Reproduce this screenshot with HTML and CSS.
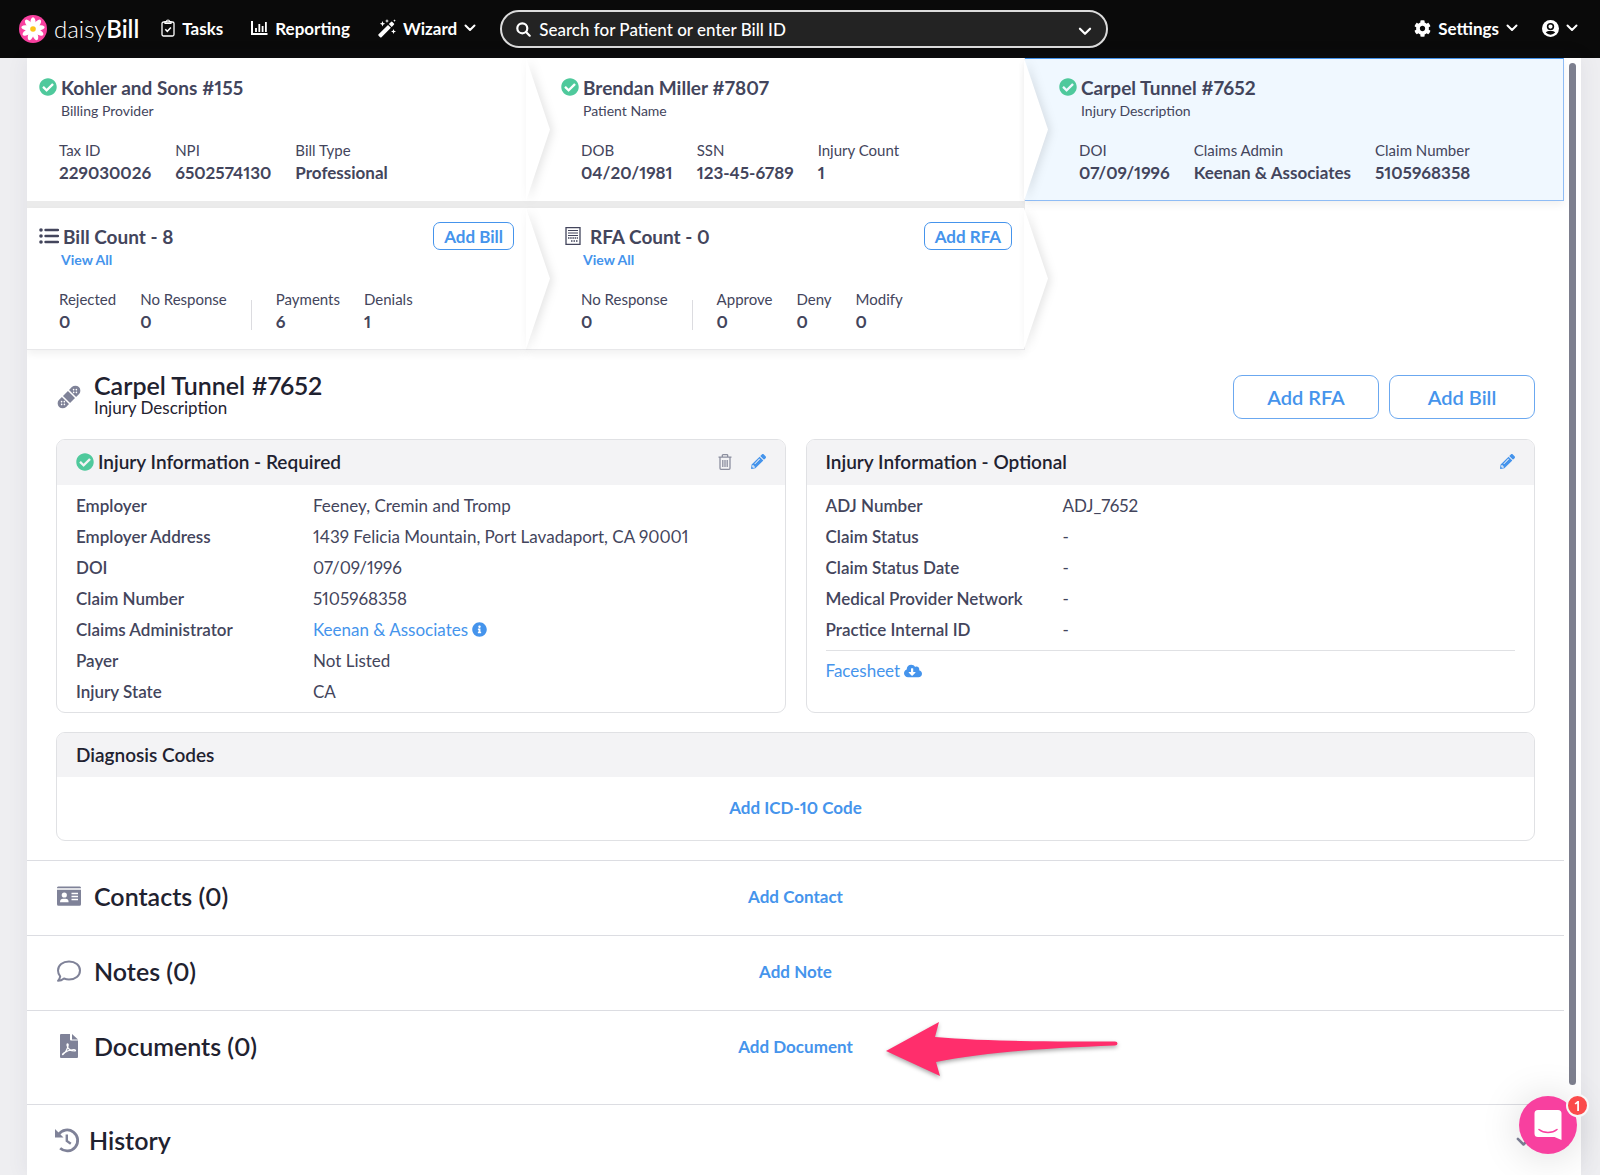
FILE: index.html
```html
<!DOCTYPE html>
<html lang="en">
<head>
    <meta charset="UTF-8">
    <meta name="viewport" content="width=device-width, initial-scale=1.0">
    <title>Carpel Tunnel #7652 | daisyBill</title>
    <link rel="stylesheet" href="styles.css">
</head>
<body>
    <!-- Shared icons -->
    <svg class="sprite" aria-hidden="true">
        <symbol id="i-check" viewBox="0 0 512 512"><path fill="currentColor" d="M504 256c0 136.967-111.033 248-248 248S8 392.967 8 256 119.033 8 256 8s248 111.033 248 248zM227.314 387.314l184-184c6.248-6.248 6.248-16.379 0-22.627l-22.627-22.627c-6.248-6.249-16.379-6.249-22.628 0L216 308.118l-70.059-70.059c-6.248-6.248-16.379-6.248-22.628 0l-22.627 22.627c-6.248 6.248-6.248 16.379 0 22.627l104 104c6.249 6.249 16.379 6.249 22.628.001z"/></symbol>
        <symbol id="i-chevron" viewBox="0 0 12 8"><path d="M1.5 1.5 6 6l4.5-4.5" fill="none" stroke="currentColor" stroke-width="2" stroke-linecap="round" stroke-linejoin="round"/></symbol>
        <symbol id="i-pencil" viewBox="0 0 512 512"><path fill="currentColor" d="M497.9 142.1l-46.1 46.1c-4.7 4.7-12.3 4.7-17 0l-111-111c-4.7-4.7-4.7-12.3 0-17l46.1-46.1c18.7-18.7 49.1-18.7 67.9 0l60.1 60.1c18.8 18.7 18.8 49.1 0 67.9zM284.2 99.8L21.6 362.4.4 483.9c-2.9 16.4 11.4 30.6 27.8 27.8l121.5-21.3 262.6-262.6c4.7-4.7 4.7-12.3 0-17l-111-111c-4.8-4.7-12.4-4.7-17.1 0zM124.1 339.9c-5.5-5.5-5.5-14.3 0-19.8l154-154c5.5-5.5 14.3-5.5 19.8 0s5.5 14.3 0 19.8l-154 154c-5.5 5.5-14.3 5.5-19.8 0zM88 424h48v36.3l-64.5 11.3-31.1-31.1L51.7 376H88v48z"/></symbol>
    </svg>

    <header class="navbar">
        <a class="logo" href="#">
            <svg width="28" height="28" viewBox="0 0 28 28" aria-hidden="true">
                <circle cx="14" cy="14" r="14" fill="#f8409f"/>
                <g fill="#fff">
                    <ellipse cx="14" cy="7.5" rx="2.6" ry="5.3"/>
                    <ellipse cx="14" cy="7.5" rx="2.6" ry="5.3" transform="rotate(40 14 14)"/>
                    <ellipse cx="14" cy="7.5" rx="2.6" ry="5.3" transform="rotate(80 14 14)"/>
                    <ellipse cx="14" cy="7.5" rx="2.6" ry="5.3" transform="rotate(120 14 14)"/>
                    <ellipse cx="14" cy="7.5" rx="2.6" ry="5.3" transform="rotate(160 14 14)"/>
                    <ellipse cx="14" cy="7.5" rx="2.6" ry="5.3" transform="rotate(200 14 14)"/>
                    <ellipse cx="14" cy="7.5" rx="2.6" ry="5.3" transform="rotate(240 14 14)"/>
                    <ellipse cx="14" cy="7.5" rx="2.6" ry="5.3" transform="rotate(280 14 14)"/>
                    <ellipse cx="14" cy="7.5" rx="2.6" ry="5.3" transform="rotate(320 14 14)"/>
                </g>
                <circle cx="14" cy="14" r="2.8" fill="#fcc419"/>
            </svg>
            <span class="logo-text">daisy<b>Bill</b></span>
        </a>
        <nav class="nav-links">
            <a href="#">
                <svg width="14" height="18" viewBox="0 0 14 18" fill="none" stroke="currentColor" aria-hidden="true">
                    <rect x="1" y="3" width="12" height="14" rx="1.5" stroke-width="1.3"/>
                    <path d="M4 4.500v-2h1.500a1.500 1.500 0 0 1 3 0H10v2z" stroke-width="1.2"/>
                    <path d="m4.300 10.300 2 2 3.600-3.800" stroke-width="1.5"/>
                </svg>
                Tasks
            </a>
            <a href="#">
                <svg width="17" height="16" viewBox="0 0 17 16" fill="none" stroke="currentColor" stroke-width="2" aria-hidden="true">
                    <path d="M1 1v13h15.500"/>
                    <path d="M5 8v4M8.300 4v8M11.600 6v6M14.900 2v10" stroke-width="1.8"/>
                </svg>
                Reporting
            </a>
            <a href="#">
                <svg width="18" height="19" viewBox="0 0 18 19" fill="currentColor" aria-hidden="true">
                    <path d="M.6 15.300 10 5.900l2.900 2.900-9.400 9.400a1 1 0 0 1-1.400 0L.6 16.700a1 1 0 0 1 0-1.400zM10.800 5.100l2.200-2.200a1 1 0 0 1 1.400 0l1.500 1.500a1 1 0 0 1 0 1.400L13.700 8z"/>
                    <path d="m4.500 2 .8 1.900L7.200 4.700l-1.900.8-.8 1.900-.8-1.900-1.900-.8 1.900-.8zM9 0l.6 1.400 1.400.6-1.400.6L9 4l-.6-1.400L7 2l1.400-.6zM15.500 10l.7 1.800 1.800.7-1.800.7-.7 1.800-.7-1.800-1.800-.7 1.800-.7zM16.500.2l.4 1 1 .4-1 .4-.4 1-.4-1-1-.4 1-.4z"/>
                </svg>
                Wizard
                <svg class="chevron" width="12" height="8"><use href="#i-chevron"/></svg>
            </a>
        </nav>
        <div class="search">
            <svg width="15" height="15" viewBox="0 0 15 15" fill="none" stroke="currentColor" stroke-width="2.2" stroke-linecap="round" aria-hidden="true">
                <circle cx="6.3" cy="6.3" r="5"/><path d="m10 10 3.700 3.700"/>
            </svg>
            <input type="text" aria-label="Search for Patient or enter Bill ID" placeholder="Search for Patient or enter Bill ID">
            <button type="button" aria-label="Search options"><svg width="14" height="9"><use href="#i-chevron"/></svg></button>
        </div>
        <div class="nav-user">
            <a href="#">
                <svg width="17" height="17" viewBox="0 0 512 512" fill="currentColor" aria-hidden="true"><path d="M487.4 315.7l-42.6-24.6c4.3-23.2 4.3-47 0-70.2l42.6-24.6c4.9-2.8 7.1-8.6 5.5-14-11.1-35.6-30-67.8-54.7-94.6-3.8-4.1-10-5.1-14.8-2.3L380.8 110c-17.9-15.4-38.5-27.3-60.8-35.1V25.8c0-5.6-3.9-10.5-9.4-11.7-36.7-8.2-74.3-7.8-109.2 0-5.5 1.2-9.4 6.1-9.4 11.7V75c-22.2 7.9-42.8 19.8-60.8 35.1L88.7 85.5c-4.9-2.8-11-1.9-14.8 2.3-24.7 26.7-43.6 58.9-54.7 94.6-1.7 5.4.6 11.2 5.5 14L67.3 221c-4.3 23.2-4.3 47 0 70.2l-42.6 24.6c-4.9 2.8-7.1 8.6-5.5 14 11.1 35.6 30 67.8 54.7 94.6 3.8 4.1 10 5.1 14.8 2.3l42.6-24.6c17.9 15.4 38.5 27.3 60.8 35.1v49.2c0 5.6 3.9 10.5 9.4 11.7 36.7 8.2 74.3 7.8 109.2 0 5.5-1.2 9.4-6.1 9.4-11.7v-49.2c22.2-7.9 42.8-19.8 60.8-35.1l42.6 24.6c4.9 2.8 11 1.9 14.8-2.3 24.7-26.7 43.6-58.9 54.7-94.6 1.5-5.5-.7-11.3-5.6-14.1zM256 336c-44.1 0-80-35.9-80-80s35.9-80 80-80 80 35.9 80 80-35.9 80-80 80z"/></svg>
                Settings
                <svg class="chevron" width="12" height="8"><use href="#i-chevron"/></svg>
            </a>
            <a href="#" aria-label="Account">
                <svg width="17" height="17" viewBox="0 0 17 17" aria-hidden="true">
                    <circle cx="8.5" cy="8.5" r="8.5" fill="currentColor"/>
                    <circle cx="8.5" cy="6.6" r="2.9" fill="none" stroke="#0a0a0a" stroke-width="1.6"/>
                    <path d="M3.800 12.600c1-1.500 2.200-1.700 4.700-1.700s3.700.2 4.700 1.700a6.400 6.400 0 0 1-9.400 0z" fill="#0a0a0a"/>
                </svg>
                <svg class="chevron" width="12" height="8"><use href="#i-chevron"/></svg>
            </a>
        </div>
    </header>

    <main class="page">
        <div class="cards">
            <section class="card first">
                <div class="card-head">
                    <svg class="check" width="18" height="18"><use href="#i-check"/></svg>
                    <h2>Kohler and Sons #155</h2>
                </div>
                <p class="card-sub">Billing Provider</p>
                <dl class="stats">
                    <div><dt>Tax ID</dt><dd>229030026</dd></div>
                    <div><dt>NPI</dt><dd>6502574130</dd></div>
                    <div><dt>Bill Type</dt><dd>Professional</dd></div>
                </dl>
                <svg class="card-arrow" preserveAspectRatio="none" viewBox="0 0 24 142"><path d="M0 0 24 71 0 142z"/></svg>
            </section>
            <section class="card">
                <div class="card-head">
                    <svg class="check" width="18" height="18"><use href="#i-check"/></svg>
                    <h2>Brendan Miller #7807</h2>
                </div>
                <p class="card-sub">Patient Name</p>
                <dl class="stats">
                    <div><dt>DOB</dt><dd>04/20/1981</dd></div>
                    <div><dt>SSN</dt><dd>123-45-6789</dd></div>
                    <div><dt>Injury Count</dt><dd>1</dd></div>
                </dl>
                <svg class="card-arrow" preserveAspectRatio="none" viewBox="0 0 24 142"><path d="M0 0 24 71 0 142z"/></svg>
            </section>
            <section class="card active">
                <div class="card-head">
                    <svg class="check" width="18" height="18"><use href="#i-check"/></svg>
                    <h2>Carpel Tunnel #7652</h2>
                </div>
                <p class="card-sub">Injury Description</p>
                <dl class="stats">
                    <div><dt>DOI</dt><dd>07/09/1996</dd></div>
                    <div><dt>Claims Admin</dt><dd>Keenan &amp; Associates</dd></div>
                    <div><dt>Claim Number</dt><dd>5105968358</dd></div>
                </dl>
            </section>
        </div>

        <div class="cards counts">
            <section class="card first">
                <div class="card-head">
                    <svg width="20" height="16" viewBox="0 0 20 16" aria-hidden="true">
                        <g fill="currentColor"><circle cx="2" cy="2" r="1.8"/><circle cx="2" cy="8" r="1.8"/><circle cx="2" cy="14" r="1.8"/></g>
                        <path d="M6.500 2H19M6.500 8H19M6.500 14H19" stroke="currentColor" stroke-width="2.4" stroke-linecap="round"/>
                    </svg>
                    <h2>Bill Count - 8</h2>
                    <button type="button" class="btn-small">Add Bill</button>
                </div>
                <p class="card-sub"><a href="#">View All</a></p>
                <dl class="stats">
                    <div><dt>Rejected</dt><dd>0</dd></div>
                    <div><dt>No Response</dt><dd>0</dd></div>
                    <div class="split"><dt>Payments</dt><dd>6</dd></div>
                    <div><dt>Denials</dt><dd>1</dd></div>
                </dl>
                <svg class="card-arrow" preserveAspectRatio="none" viewBox="0 0 24 142"><path d="M0 0 24 71 0 142z"/></svg>
            </section>
            <section class="card rfa">
                <div class="card-head">
                    <svg width="16" height="18" viewBox="0 0 16 18" fill="none" stroke="currentColor" aria-hidden="true">
                        <path d="M1 .7h14v16.600H1z" stroke-width="1.3"/>
                        <path d="M3 3.500h10M3 6h10M3 8.500h10" stroke-width="1.2"/>
                        <path d="M3 11h10M6 14h1.500M8.500 14H10M11 14h2" stroke-width="1.4" stroke-dasharray="1.5 .7"/>
                    </svg>
                    <h2>RFA Count - 0</h2>
                    <button type="button" class="btn-small">Add RFA</button>
                </div>
                <p class="card-sub"><a href="#">View All</a></p>
                <dl class="stats">
                    <div><dt>No Response</dt><dd>0</dd></div>
                    <div class="split"><dt>Approve</dt><dd>0</dd></div>
                    <div><dt>Deny</dt><dd>0</dd></div>
                    <div><dt>Modify</dt><dd>0</dd></div>
                </dl>
                <svg class="card-arrow" preserveAspectRatio="none" viewBox="0 0 24 142"><path d="M0 0 24 71 0 142z"/></svg>
            </section>
        </div>

        <section class="injury">
            <div class="injury-head">
                <svg width="26" height="26" viewBox="0 0 26 26" aria-hidden="true">
                    <g transform="rotate(-45 13 13)">
                        <path d="M4 8h4v10H4A5 5 0 0 1 4 8zM22 8h-4v10h4a5 5 0 0 0 0-10zM9.500 8h7v10h-7z" fill="#7f8298"/>
                        <g fill="#fff"><circle cx="2.6" cy="13" r=".8"/><circle cx="4.500" cy="11" r=".8"/><circle cx="4.500" cy="15" r=".8"/><circle cx="6.400" cy="13" r=".8"/><circle cx="23.400" cy="13" r=".8"/><circle cx="21.500" cy="11" r=".8"/><circle cx="21.500" cy="15" r=".8"/><circle cx="19.600" cy="13" r=".8"/></g>
                    </g>
                </svg>
                <div class="injury-title">
                    <h1>Carpel Tunnel #7652</h1>
                    <p>Injury Description</p>
                </div>
                <button type="button" class="btn">Add RFA</button>
                <button type="button" class="btn">Add Bill</button>
            </div>

            <div class="panels">
                <section class="panel">
                    <div class="panel-head">
                        <svg class="check" width="18" height="18"><use href="#i-check"/></svg>
                        <h3>Injury Information - Required</h3>
                        <div class="panel-tools">
                            <button type="button" aria-label="Delete" class="trash">
                                <svg width="14" height="16" viewBox="0 0 14 16" fill="none" stroke="currentColor" stroke-width="1.3" aria-hidden="true">
                                    <path d="M.5 3.200h13M4.300 3V1.500q0-.8.800-.8h3.800q.8 0 .8.800V3M2 3.500v10.800q0 1 1 1h8q1 0 1-1V3.500M4.800 6v7M7 6v7M9.200 6v7"/>
                                </svg>
                            </button>
                            <button type="button" aria-label="Edit"><svg width="15" height="15"><use href="#i-pencil"/></svg></button>
                        </div>
                    </div>
                    <dl class="details">
                        <dt>Employer</dt><dd>Feeney, Cremin and Tromp</dd>
                        <dt>Employer Address</dt><dd>1439 Felicia Mountain, Port Lavadaport, CA 90001</dd>
                        <dt>DOI</dt><dd>07/09/1996</dd>
                        <dt>Claim Number</dt><dd>5105968358</dd>
                        <dt>Claims Administrator</dt>
                        <dd>
                            <a href="#">Keenan &amp; Associates
                            <svg width="15" height="15" viewBox="0 0 512 512" fill="currentColor" aria-hidden="true"><path d="M256 8C119.043 8 8 119.083 8 256c0 136.997 111.043 248 248 248s248-111.003 248-248C504 119.083 392.957 8 256 8zm0 110c23.196 0 42 18.804 42 42s-18.804 42-42 42-42-18.804-42-42 18.804-42 42-42zm56 254c0 6.627-5.373 12-12 12h-88c-6.627 0-12-5.373-12-12v-24c0-6.627 5.373-12 12-12h12v-64h-12c-6.627 0-12-5.373-12-12v-24c0-6.627 5.373-12 12-12h64c6.627 0 12 5.373 12 12v100h12c6.627 0 12 5.373 12 12v24z"/></svg></a>
                        </dd>
                        <dt>Payer</dt><dd>Not Listed</dd>
                        <dt>Injury State</dt><dd>CA</dd>
                    </dl>
                </section>
                <section class="panel">
                    <div class="panel-head">
                        <h3>Injury Information - Optional</h3>
                        <div class="panel-tools">
                            <button type="button" aria-label="Edit"><svg width="15" height="15"><use href="#i-pencil"/></svg></button>
                        </div>
                    </div>
                    <dl class="details">
                        <dt>ADJ Number</dt><dd>ADJ_7652</dd>
                        <dt>Claim Status</dt><dd>-</dd>
                        <dt>Claim Status Date</dt><dd>-</dd>
                        <dt>Medical Provider Network</dt><dd>-</dd>
                        <dt>Practice Internal ID</dt><dd>-</dd>
                    </dl>
                    <p class="facesheet">
                        <a href="#">Facesheet
                        <svg width="18" height="14" viewBox="0 32 640 448" fill="currentColor" aria-hidden="true"><path d="M537.6 226.6c4.1-10.7 6.4-22.4 6.4-34.6 0-53-43-96-96-96-19.7 0-38.1 6-53.3 16.2C367 64.2 315.3 32 256 32c-88.4 0-160 71.6-160 160 0 2.7.1 5.4.2 8.1C40.2 219.8 0 273.2 0 336c0 79.5 64.5 144 144 144h368c70.7 0 128-57.3 128-128 0-61.9-44-113.6-102.4-125.4zm-132.9 88.700L299.300 420.700c-6.200 6.200-16.400 6.200-22.600 0L171.300 315.300c-10.100-10.100-2.900-27.300 11.300-27.300H248V176c0-8.800 7.200-16 16-16h48c8.800 0 16 7.200 16 16v112h65.400c14.200 0 21.400 17.200 11.300 27.300z"/></svg></a>
                    </p>
                </section>
            </div>

            <section class="panel diagnosis">
                <div class="panel-head"><h3>Diagnosis Codes</h3></div>
                <p><a class="add" href="#">Add ICD-10 Code</a></p>
            </section>
        </section>

        <section class="row">
            <svg width="26" height="20" viewBox="0 0 26 20" aria-hidden="true">
                <path d="M1 2.200A1.500 1.500 0 0 1 2.200.5h21.600A1.500 1.500 0 0 1 25 2.200zM1 3.700h24v14.600a1.500 1.500 0 0 1-1.500 1.500h-21A1.500 1.500 0 0 1 1 18.300z" fill="#7f8298"/>
                <circle cx="8.3" cy="9" r="2.6" fill="#fff"/>
                <path d="M4 16.200c0-2.400 1.300-3.400 3-3.400h2.600c1.700 0 3 1 3 3.400z" fill="#fff"/>
                <path d="M15.500 7.500H22M15.500 10.500H22M15.500 13.500H22" stroke="#fff" stroke-width="1.4"/>
            </svg>
            <h2>Contacts (0)</h2>
            <a class="add" href="#">Add Contact</a>
        </section>
        <section class="row">
            <svg width="26" height="24" viewBox="0 0 26 24" fill="none" stroke="#7f8298" stroke-width="2" stroke-linejoin="round" aria-hidden="true">
                <path d="M13 2.500c6.300 0 11 3.900 11 9s-4.700 9-11 9c-1.800 0-3.500-.4-5-1-1.500 1.300-3.500 2.300-6 2.300 1.300-1.500 2-2.900 2.200-4.500C2.800 15.700 2 13.700 2 11.500c0-5.100 4.700-9 11-9z"/>
            </svg>
            <h2>Notes (0)</h2>
            <a class="add" href="#">Add Note</a>
        </section>
        <section class="row documents">
            <svg width="26" height="26" viewBox="0 0 26 26" aria-hidden="true">
                <path d="M4 2q0-1 1-1h9v5.500q0 1 1 1h7V24q0 1-1 1H5q-1 0-1-1zM16 1l6 5.500h-6z" fill="#7f8298"/>
                <path d="M7 21.500c2-1.500 5-6 5.200-9.500 0-1.500-1.400-1.500-1.200.3.400 3 3.300 5.700 7.500 5.700 1.800-.2 1-1.400-.8-1.300-4 .3-7.700 1.700-10.200 3.600-1.200 1-1.300 1.800-.5 1.200z" fill="none" stroke="#fff" stroke-width="1.2"/>
            </svg>
            <h2>Documents (0)</h2>
            <a class="add" href="#">Add Document
                <svg class="pointer" width="236" height="60" viewBox="0 0 236 60" aria-hidden="true">
                    <path d="M2 31 55 2l-4 15c45 4 100 4.500 180 4.500q2.500 0 2.500 2t-2.500 2C160 28 95 33 52 42l4 14z" fill="#ff2e6c"/>
                </svg>
            </a>
        </section>
        <section class="row history">
            <svg width="26" height="26" viewBox="0 0 26 26" fill="none" stroke="#7f8298" stroke-width="2.8" aria-hidden="true">
                <path d="M4.500 7.500a10.500 10.500 0 1 1 1.700 13.800"/>
                <path d="M12.800 7.500V14l4 2.800" stroke-width="2.4"/>
                <path d="M1 2v8.500h8.500z" fill="#7f8298" stroke="none"/>
            </svg>
            <h2>History</h2>
            <button type="button" class="expand" aria-label="Show history"><svg width="15" height="10"><use href="#i-chevron"/></svg></button>
        </section>
    </main>

    <div class="scroll-thumb"></div>

    <button type="button" class="chat" aria-label="Open chat">
        <svg width="28" height="32" viewBox="0 0 28 32" aria-hidden="true">
            <path d="M4 1h20a3.500 3.500 0 0 1 3.500 3.500V31l-7-3H4a3.500 3.500 0 0 1-3.500-3.500v-20A3.500 3.500 0 0 1 4 1z" fill="#fff"/>
            <path d="M5 20.500c5 4 13 4 18 0" fill="none" stroke="#f8409f" stroke-width="1.6" stroke-linecap="round"/>
        </svg>
        <span class="chat-badge">1</span>
    </button>
</body>
</html>
```
FILE: styles.css
```css
* {
    margin: 0;
    padding: 0;
    box-sizing: border-box;
}

body {
    display: flex;
    flex-direction: column;
    height: 100vh;
    overflow: hidden;
    background: #eeeef1;
    color: #43455c;
    font-family: Lato, 'Open Sans', sans-serif;
    font-size: 17px;
    font-variant-numeric: proportional-nums;
}

a {
    color: #4594ec;
    text-decoration: none;
}

button,
input {
    font: inherit;
    color: inherit;
    background: none;
    border: none;
}

button {
    cursor: pointer;
}

svg {
    flex-shrink: 0;
}

h1,
h2,
h3 {
    font-weight: 600;
}

.sprite {
    position: absolute;
    width: 0;
    height: 0;
}

.check {
    color: #4fc99c;
}

/* Navbar */
.navbar {
    display: flex;
    align-items: center;
    height: 58px;
    flex-shrink: 0;
    padding: 0 22px 0 19px;
    background: #0a0a0a;
    color: #fff;
}

.navbar a {
    display: flex;
    align-items: center;
    gap: 7px;
    padding-bottom: 2px;
    color: #fff;
    font-weight: 700;
}

.navbar .logo {
    padding-bottom: 0;
    font-size: 24px;
    font-weight: 300;
}

.logo-text {
    padding-bottom: 2px;
}

.logo-text b {
    font-weight: 600;
}

.nav-links {
    display: flex;
    gap: 28px;
    margin-left: 22px;
}

.search {
    display: flex;
    align-items: center;
    gap: 8px;
    width: 39%;
    height: 38px;
    margin-left: 24px;
    padding: 0 14px;
    border: 2px solid #dcdcdc;
    border-radius: 19px;
    background: #232323;
}

.search input {
    flex: 1;
    outline: none;
}

.search input::placeholder {
    color: #fff;
    font-weight: 500;
    opacity: 1;
}

.nav-user {
    display: flex;
    gap: 24px;
    margin-left: auto;
}

/* Page */
.page {
    flex: 1;
    min-height: 0;
    margin: 0 19px 0 27px;
    padding-right: 17px;
    background: #fff;
    box-shadow: 0 0 20px rgba(60, 60, 90, 0.08);
    overflow: hidden;
}

.cards {
    display: grid;
    grid-template-columns: 25fr 25fr 27fr;
}

.counts {
    margin-top: 7px;
}

.card {
    position: relative;
    height: 143px;
    padding: 17px 12px 0 35px;
    border-right: 1px solid #e8e8ea;
    background: #fff;
    box-shadow: 0 7px 0 #ebebeb;
}

.card.first {
    padding-left: 12px;
    border-right: none;
    z-index: 1;
}

.card.active {
    padding-top: 16px;
    padding-left: 34px;
    border: 1px solid #8fbcf5;
    border-left: none;
    border-top-color: #4594ec;
    background: #f0f8ff;
    box-shadow: 0 4px 8px rgba(0, 0, 0, 0.06);
}

.counts .card {
    height: 142px;
    padding-top: 16px;
    border-bottom: 1px solid #e8e8ea;
    box-shadow: 0 4px 8px rgba(0, 0, 0, 0.06);
}

.card-arrow {
    position: absolute;
    top: 0;
    left: 100%;
    z-index: 2;
    width: 24px;
    height: 100%;
    fill: #fff;
    filter: drop-shadow(3px 1px 4px rgba(0, 0, 0, 0.1));
    overflow: visible;
}

.card-head {
    display: flex;
    align-items: center;
    gap: 4px;
    height: 24px;
}

.card-head h2 {
    font-size: 19px;
    font-weight: 700;
}

.card.rfa .card-head {
    gap: 9px;
    padding-left: 4px;
}

.card-sub {
    padding-left: 22px;
    font-size: 14px;
    line-height: 24px;
}

.card-sub a {
    font-weight: 700;
}

.btn-small {
    height: 28px;
    margin-left: auto;
    padding: 0 10px;
    border: 1px solid #4594ec;
    border-radius: 7px;
    color: #4594ec;
    font-weight: 700;
}

.stats {
    display: flex;
    gap: 24px;
    margin-top: 16px;
    padding-left: 20px;
}

.stats dt {
    font-size: 15px;
    line-height: 22px;
}

.stats dd {
    font-weight: 700;
    line-height: 24px;
}

.stats .split {
    position: relative;
    padding-left: 25px;
}

.stats .split::before {
    content: '';
    position: absolute;
    left: 0;
    top: 12px;
    bottom: 4px;
    width: 1px;
    background: #dcdce0;
}

/* Injury */
.injury {
    padding: 23px 29px 19px;
}

.injury-head {
    display: flex;
    align-items: center;
    gap: 10px;
    color: #1f2230;
}

.injury-title {
    flex: 1;
    padding: 0 0 2px 2px;
}

.injury-head h1 {
    font-size: 25px;
    line-height: 24px;
}

.injury-head p {
    line-height: 22px;
}

.btn {
    width: 146px;
    height: 44px;
    border: 1px solid #6ba8f0;
    border-radius: 9px;
    color: #4594ec;
    font-size: 20px;
    font-weight: 600;
}

.panels {
    display: grid;
    grid-template-columns: 1fr 1fr;
    gap: 20px;
    margin: 18px 0 19px;
}

.panel {
    border: 1px solid #e0e1e4;
    border-radius: 9px;
    overflow: hidden;
}

.panel-head {
    display: flex;
    align-items: center;
    gap: 4px;
    height: 45px;
    padding: 0 19px 2px;
    background: #f3f3f5;
    color: #1f2230;
}

.panel-head h3 {
    font-size: 19px;
}

.panel-tools {
    display: flex;
    gap: 19px;
    margin-left: auto;
    color: #4594ec;
}

.panel-tools button {
    display: flex;
}

.panel-tools .trash {
    color: #8c8f9f;
}

.details {
    display: grid;
    grid-template-columns: 237px 1fr;
    padding: 5px 19px;
    line-height: 31px;
}

.details dt {
    font-weight: 600;
}

.details svg,
.facesheet svg {
    vertical-align: -1px;
}

.facesheet {
    margin: 0 19px;
    border-top: 1px solid #e0e1e4;
    line-height: 40px;
}

.add {
    font-weight: 700;
}

.diagnosis .panel-head {
    height: 44px;
}

.diagnosis p {
    padding-bottom: 2px;
    line-height: 61px;
    text-align: center;
}

/* Collapsible rows */
.row {
    display: grid;
    grid-template-columns: 1fr auto 1fr;
    align-items: center;
    height: 75px;
    padding: 0 29px 4px;
    border-top: 1px solid #dcdde2;
}

.row svg {
    grid-area: 1 / 1;
}

.row h2 {
    grid-area: 1 / 1;
    padding-left: 38px;
    color: #1f2230;
    font-size: 25px;
}

.row .add {
    grid-area: 1 / 2;
    position: relative;
}

.documents {
    height: 94px;
    padding-bottom: 23px;
}

.pointer {
    position: absolute;
    top: -16px;
    left: calc(100% + 31px);
    filter: drop-shadow(0 2px 2px rgba(0, 0, 0, 0.35));
}

.history {
    padding-left: 27px;
}

.history h2 {
    padding-left: 35px;
}

.history .expand {
    grid-area: 1 / 3;
    justify-self: end;
    padding: 4px;
    color: #7f8298;
}

.scroll-thumb {
    position: fixed;
    top: 63px;
    right: 24px;
    bottom: 90px;
    width: 7px;
    border-radius: 4px;
    background: #7d7f8e;
}

.chat {
    position: fixed;
    right: 23px;
    bottom: 21px;
    display: flex;
    align-items: center;
    justify-content: center;
    width: 58px;
    height: 58px;
    border-radius: 50%;
    background: #f8409f;
    box-shadow: 0 2px 40px rgba(0, 0, 0, 0.15);
}

.chat-badge {
    position: absolute;
    top: -2px;
    right: -12px;
    width: 23px;
    height: 23px;
    border: 2px solid #f8f8f8;
    border-radius: 50%;
    background: #fb4b4b;
    color: #fff;
    font-size: 14px;
    font-weight: 700;
    line-height: 19px;
}
```
